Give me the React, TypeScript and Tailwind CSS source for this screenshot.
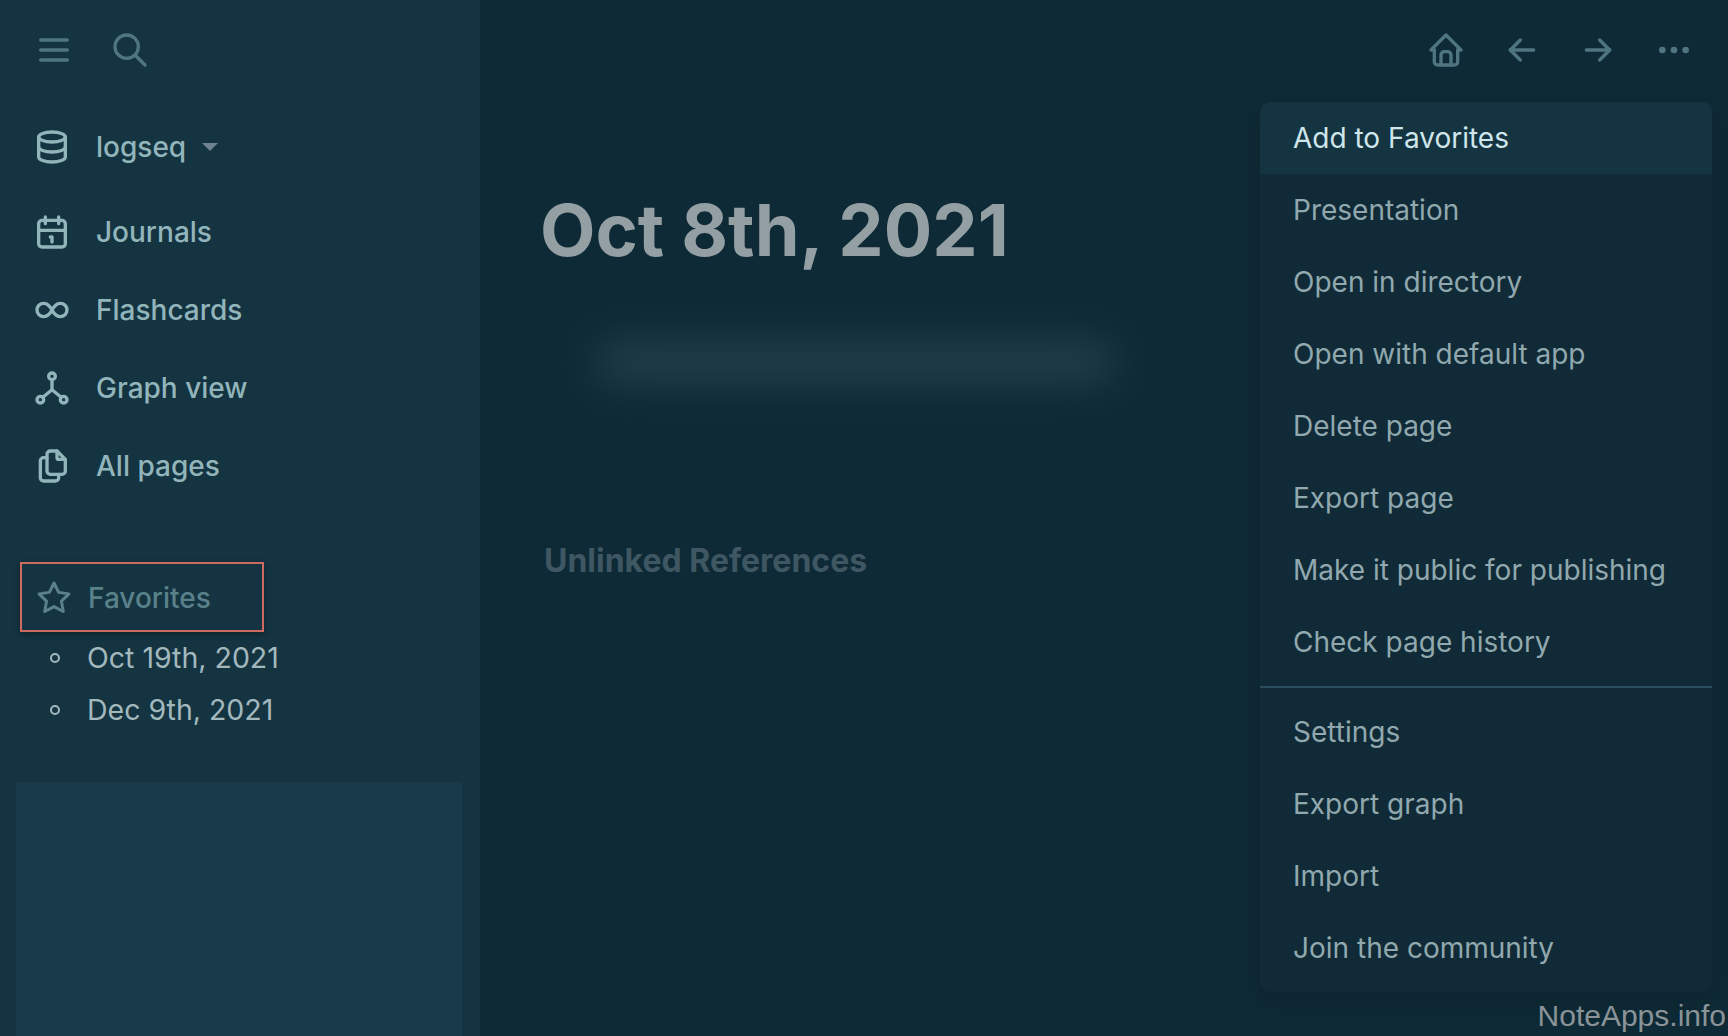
import React from 'react'
import {
  TbArrowLeft,
  TbArrowRight,
  TbDatabase,
  TbDots,
  TbFiles,
  TbHierarchy,
  TbHome,
  TbInfinity,
  TbMenu2,
  TbSearch,
  TbStar,
} from 'react-icons/tb'

function CalendarOne({ size = 40 }: { size?: number }) {
  return (
    <svg width={size} height={size} viewBox="0 0 24 24" fill="none" stroke="currentColor" strokeWidth="2" strokeLinecap="round" strokeLinejoin="round">
      <rect x="4" y="5" width="16" height="16" rx="2" />
      <path d="M16 3v4M8 3v4M4 11h16M11 15h1v3" />
    </svg>
  )
}

const navItems = [
  { label: 'Journals', icon: <CalendarOne /> },
  { label: 'Flashcards', icon: <TbInfinity size={40} /> },
  { label: 'Graph view', icon: <TbHierarchy size={40} /> },
  { label: 'All pages', icon: <TbFiles size={40} /> },
]

const menuTop = ['Presentation', 'Open in directory', 'Open with default app', 'Delete page', 'Export page', 'Make it public for publishing', 'Check page history']
const menuBottom = ['Settings', 'Export graph', 'Import', 'Join the community']

function MenuItem({ label }: { label: string }) {
  return <div className="flex h-[72px] items-center pl-[33px] text-[#90a8ae]">{label}</div>
}

export default function App() {
  return (
    <div className="relative flex h-[1036px] w-full overflow-hidden bg-[#0e2a36] font-['Inter',sans-serif] text-[28px]">
      {/* Sidebar */}
      <aside className="flex w-[480px] flex-col bg-[#143441] pt-[30px]">
        <div className="flex gap-9 pl-[34px] text-[#4f7680]">
          <TbMenu2 size={40} />
          <TbSearch size={40} />
        </div>

        <div className="mt-[57px] flex h-10 items-center gap-6 pl-8 font-medium text-[#92b5bb]">
          <TbDatabase size={40} />
          <span>logseq</span>
          <span className="-ml-2 h-0 w-0 border-x-[8px] border-t-[8px] border-x-transparent border-t-[#6f8290]" />
        </div>

        <nav className="mt-[26px]">
          {navItems.map((item) => (
            <div key={item.label} className="flex h-[78px] items-center gap-6 pl-8 font-medium text-[#92b5bb]">
              {item.icon}
              <span>{item.label}</span>
            </div>
          ))}
        </nav>

        <div className="mt-[57px] ml-5 flex h-[70px] w-[244px] items-center gap-4 border-2 border-[#cf6a62] pt-0.5 pl-3.5 font-medium text-[#5a818a] shadow-[0_2px_6px_rgba(0,0,0,0.35)]">
          <TbStar size={36} />
          <span>Favorites</span>
        </div>

        <ul className="pl-[50px] text-[28.5px] text-[#a3b8bd]">
          {['Oct 19th, 2021', 'Dec 9th, 2021'].map((d) => (
            <li key={d} className="flex h-[52px] items-center gap-[27px]">
              <span className="h-2.5 w-2.5 rounded-full border-2 border-[#a3b8bd]" />
              <span>{d}</span>
            </li>
          ))}
        </ul>

        <div className="mt-[46px] mr-[18px] ml-4 flex-1 bg-[#183a4b]" />
      </aside>

      {/* Main */}
      <main className="flex flex-1 flex-col pl-[60px]">
        <div className="-ml-[60px] flex justify-end gap-9 pt-[30px] pr-[34px] text-[#4f7680]">
          <TbHome size={40} />
          <TbArrowLeft size={40} />
          <TbArrowRight size={40} />
          <TbDots size={40} />
        </div>

        <h1 className="mt-[116px] text-[72px] leading-[88px] font-bold text-[#939fa3]">Oct 8th, 2021</h1>

        <div className="mt-[68px] ml-[55px] h-10 w-[520px] rounded-full bg-[#24404b] blur-[20px]" />

        <h2 className="mt-[155px] ml-1 text-[32px] font-bold text-[#3e5762]">Unlinked References</h2>
      </main>

      {/* Dropdown over the page */}
      <div className="absolute top-[102px] left-[1260px] w-[452px] rounded-[10px] bg-[#102b37] pb-2 shadow-[0_8px_24px_rgba(0,0,0,0.15)]">
        <div className="flex h-[72px] items-center rounded-t-[10px] bg-[#153441] pl-[33px] text-[#cfe6ec]">Add to Favorites</div>
        {menuTop.map((label) => (
          <MenuItem key={label} label={label} />
        ))}
        <div className="mt-2 mb-2 h-0.5 bg-[#2a4e5e]" />
        {menuBottom.map((label) => (
          <MenuItem key={label} label={label} />
        ))}
      </div>

      <span className="absolute right-[2px] -bottom-0.5 font-['Liberation_Sans',sans-serif] text-[30px] text-[#8a9397]">NoteApps.info</span>
    </div>
  )
}
